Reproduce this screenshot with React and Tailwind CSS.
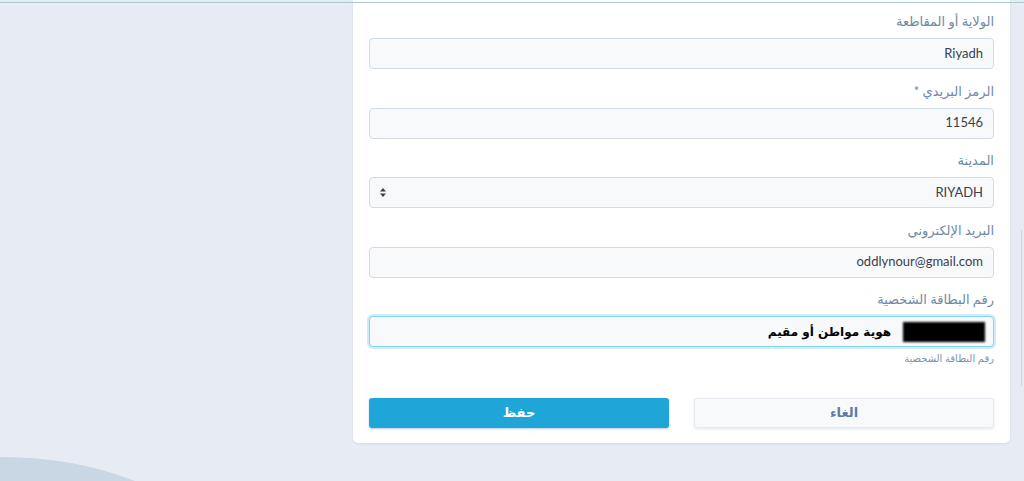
import React from "react";

const font = { fontFamily: 'Lato, "DejaVu Sans", sans-serif' };

function Label({ children }) {
  return (
    <div className="h-[28px] pt-[1px] text-[13px] leading-[20px] text-[#6f88a8]">{children}</div>
  );
}

function Field({ label, children }) {
  return (
    <div className="flex flex-col">
      <Label>{label}</Label>
      {children}
    </div>
  );
}

function TextBox({ value }) {
  return (
    <div className="h-[31px] rounded-[4px] border border-[#cfdbe9] bg-[#f8f9fb] px-[10px] flex items-center text-[13px] text-[#38414d]">
      <span dir="ltr">{value}</span>
    </div>
  );
}

export default function App() {
  return (
    <div className="relative w-full h-[481px] overflow-hidden bg-[#e7ecf4]" style={font}>
      {/* decorative curve */}
      <svg className="absolute left-0 bottom-0" width="160" height="30" viewBox="0 0 160 30">
        <path d="M0 6 C 50 6, 95 14, 135 30 L 0 30 Z" fill="#c9d7e5" />
      </svg>

      {/* scrollbar hint */}
      <div className="absolute right-[2px] top-[230px] h-[156px] w-px bg-[#cfd6df]" />

      <div className="flex">
        <div
          dir="rtl"
          className="ml-[353px] w-[657px] bg-white rounded-b-[5px] shadow-[0_1px_2px_rgba(60,80,110,0.12)] px-[16px] pt-[10px] pb-[15px]"
        >
          <div className="flex flex-col gap-[10.5px]">
            <Field label="الولاية أو المقاطعة">
              <TextBox value="Riyadh" />
            </Field>
            <Field label="الرمز البريدي *">
              <TextBox value="11546" />
            </Field>
            <Field label="المدينة">
              <div className="h-[31px] rounded-[4px] border border-[#cfdbe9] bg-[#f8f9fb] px-[10px] flex items-center justify-between text-[13px] text-[#38414d]">
                <span dir="ltr">RIYADH</span>
                <svg width="6" height="9" viewBox="0 0 6 9">
                  <path d="M3 0 L6 3.5 L0 3.5 Z" fill="#3a3f46" />
                  <path d="M3 9 L6 5.5 L0 5.5 Z" fill="#3a3f46" />
                </svg>
              </div>
            </Field>
            <Field label="البريد الإلكتروني">
              <TextBox value="oddlynour@gmail.com" />
            </Field>
            <div className="flex flex-col">
              <Label>رقم البطاقة الشخصية</Label>
              <div className="h-[31px] rounded-[4px] border border-[#86d2f1] bg-[#f8f9fb] shadow-[0_0_0_2px_rgba(120,205,240,0.35)] px-[8px] flex items-center gap-[12px]">
                <div className="w-[82px] h-[20px] bg-black blur-[1px]" />
                <span className="text-[12px] font-bold text-black" style={{ fontFamily: '"DejaVu Sans", sans-serif' }}>
                  هوية مواطن أو مقيم
                </span>
              </div>
              <div className="mt-[4px] text-[10px] leading-[14px] text-[#7d92ad]">رقم البطاقة الشخصية</div>
            </div>
          </div>

          <div className="mt-[33px] grid grid-cols-2 gap-[25px]">
            <button className="h-[30px] rounded-[3px] border border-[#e4e9ef] bg-[#f8f9fb] shadow-[0_1px_3px_rgba(60,80,110,0.15)] text-[13px] font-bold text-[#5e7ca3]">
              الغاء
            </button>
            <button className="h-[30px] rounded-[3px] bg-[#1fa5d7] shadow-[0_1px_2px_rgba(30,100,140,0.3)] text-[13px] font-bold text-white">
              حفظ
            </button>
          </div>
        </div>
      </div>

      {/* top line */}
      <div className="absolute left-0 top-[2px] w-full h-px bg-[#a8c8cb]" />
    </div>
  );
}
